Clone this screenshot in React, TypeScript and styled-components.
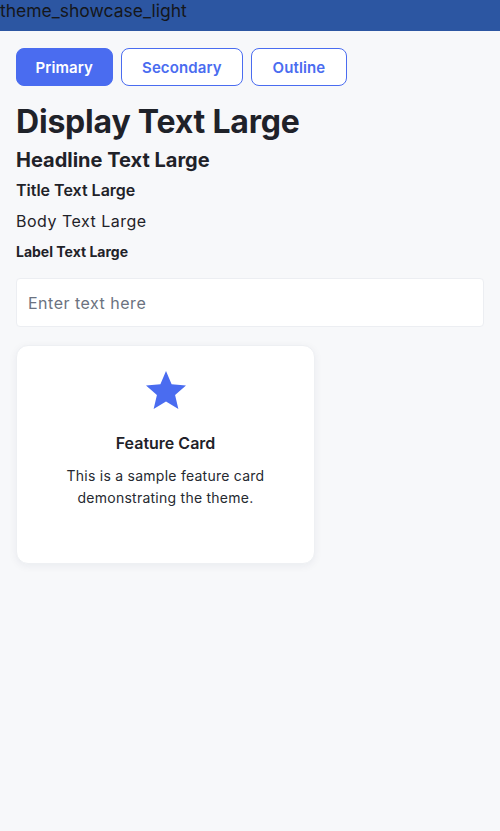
import React from "react";
import styled, { createGlobalStyle } from "styled-components";

const Global = createGlobalStyle`
  html, body { margin: 0; padding: 0; background: #f7f8fa; }
  body { font-family: Inter, "Noto Sans", sans-serif; }
  * { box-sizing: border-box; }
`;

const Page = styled.div`
  width: 500px;
  min-height: 831px;
  background: #f7f8fa;
`;

const TitleBar = styled.div`
  height: 31px;
  background: #2c56a2;
  color: #15171b;
  font-family: Inter, sans-serif;
  font-size: 17.5px;
  line-height: 22px;
  display: flex;
  align-items: flex-start;
`;

const Content = styled.div`
  padding: 17px 16px 16px;
  display: flex;
  flex-direction: column;
`;

const ButtonRow = styled.div`
  display: flex;
  gap: 8px;
`;

const Button = styled.button<{ $variant: "primary" | "outline" }>`
  height: 38px;
  padding: 0 ${(p) => (p.$variant === "primary" ? "18.5px" : "20.5px")};
  border-radius: 8px;
  font-family: Inter, sans-serif;
  font-size: 15px;
  font-weight: 600;
  letter-spacing: 0.1px;
  cursor: pointer;
  border: 1.5px solid #4a6cf0;
  background: ${(p) => (p.$variant === "primary" ? "#4a6cf0" : "#ffffff")};
  color: ${(p) => (p.$variant === "primary" ? "#ffffff" : "#4a6cf0")};
`;

const Display = styled.h1`
  margin: 16px 0 0;
  font-size: 32px;
  line-height: 40px;
  font-weight: 700;
  color: #1f2229;
  letter-spacing: -0.2px;
`;

const Headline = styled.h2`
  margin: 4px 0 0;
  font-size: 20px;
  line-height: 28px;
  font-weight: 700;
  color: #1f2229;
`;

const TitleText = styled.div`
  margin-top: 4px;
  font-size: 16px;
  line-height: 24px;
  font-weight: 600;
  color: #1f2229;
`;

const BodyText = styled.div`
  margin-top: 7px;
  font-size: 16px;
  line-height: 24px;
  font-weight: 400;
  letter-spacing: 0.5px;
  color: #1f2229;
`;

const LabelText = styled.div`
  margin-top: 9px;
  font-size: 14px;
  line-height: 20px;
  font-weight: 700;
  color: #1f2229;
`;

const Input = styled.input`
  margin-top: 16px;
  height: 49px;
  width: 100%;
  border: 1px solid #eceef2;
  border-radius: 4px;
  background: #ffffff;
  padding: 0 11px;
  font-family: Inter, sans-serif;
  font-size: 16px;
  letter-spacing: 0.5px;
  color: #1f2229;
  outline: none;
  &::placeholder { color: #6b7280; }
`;

const Card = styled.div`
  margin-top: 18px;
  width: 299px;
  height: 219px;
  background: #ffffff;
  border-radius: 12px;
  border: 1px solid #eef0f3;
  box-shadow: 0 2px 8px rgba(20, 30, 60, 0.06);
  padding: 21px 16px 16px;
  display: flex;
  flex-direction: column;
  align-items: center;
  text-align: center;
`;

const CardTitle = styled.div`
  margin-top: 16px;
  font-size: 16px;
  line-height: 24px;
  font-weight: 600;
  color: #1f2229;
`;

const CardBody = styled.div`
  margin-top: 10px;
  width: 220px;
  font-size: 14px;
  line-height: 22px;
  letter-spacing: 0.25px;
  color: #262a31;
`;

const Star = () => (
  <svg width="48" height="48" viewBox="0 0 24 24" fill="#4a6cf0">
    <path d="M12 17.27L18.18 21l-1.64-7.03L22 9.24l-7.19-.61L12 2 9.19 8.63 2 9.24l5.46 4.73L5.82 21z" />
  </svg>
);

export default function App() {
  return (
    <Page>
      <Global />
      <TitleBar>theme_showcase_light</TitleBar>
      <Content>
        <ButtonRow>
          <Button $variant="primary">Primary</Button>
          <Button $variant="outline">Secondary</Button>
          <Button $variant="outline">Outline</Button>
        </ButtonRow>
        <Display>Display Text Large</Display>
        <Headline>Headline Text Large</Headline>
        <TitleText>Title Text Large</TitleText>
        <BodyText>Body Text Large</BodyText>
        <LabelText>Label Text Large</LabelText>
        <Input placeholder="Enter text here" />
        <Card>
          <Star />
          <CardTitle>Feature Card</CardTitle>
          <CardBody>This is a sample feature card demonstrating the theme.</CardBody>
        </Card>
      </Content>
    </Page>
  );
}
